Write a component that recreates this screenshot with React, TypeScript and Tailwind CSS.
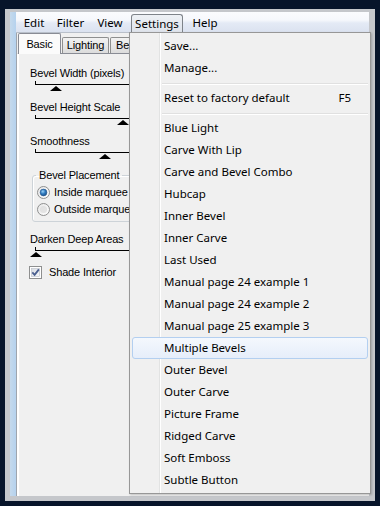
import React from "react";

const MENU_FONT = "font-['Noto_Sans','Open_Sans',sans-serif]";
const DLG_FONT = "font-['Liberation_Sans','Arial',sans-serif]";

function Thumb({ cls }: { cls: string }) {
  return (
    <svg className={"absolute top-[6px] " + cls} width="12" height="5" viewBox="0 0 12 5">
      <polygon points="6,0 12,5 0,5" fill="#000" />
    </svg>
  );
}

function SliderBlock({ label, thumbCls }: { label: string; thumbCls: string }) {
  return (
    <div className="flex flex-col">
      <div className="h-[14px] leading-[14px]">{label}</div>
      <div className="relative h-[20px] pl-[5px] pt-[1px]">
        <div className="h-[4px] border-l border-b border-black" />
        <Thumb cls={thumbCls} />
      </div>
    </div>
  );
}

function Radio({ checked, id }: { checked: boolean; id: string }) {
  return (
    <svg width="13" height="13" viewBox="0 0 13 13" className="shrink-0">
      <defs>
        <linearGradient id={id + "bg"} x1="0" y1="0" x2="1" y2="1">
          <stop offset="0" stopColor="#e6e6e6" />
          <stop offset="1" stopColor="#ffffff" />
        </linearGradient>
        <radialGradient id={id + "dot"} cx="0.4" cy="0.35" r="0.7">
          <stop offset="0" stopColor="#9bd0f5" />
          <stop offset="0.5" stopColor="#2f7bc0" />
          <stop offset="1" stopColor="#1c4f86" />
        </radialGradient>
      </defs>
      <circle cx="6.5" cy="6.5" r="6" fill={`url(#${id}bg)`} stroke="#8e8f8f" />
      {checked ? (
        <circle cx="6.5" cy="6.5" r="3.4" fill={`url(#${id}dot)`} stroke="#27578e" strokeWidth="0.6" />
      ) : (
        <circle cx="6.5" cy="6.5" r="3.6" fill="#dcdcdc" opacity="0.7" />
      )}
    </svg>
  );
}

function Checkbox() {
  return (
    <svg width="13" height="13" viewBox="0 0 13 13" className="shrink-0">
      <defs>
        <linearGradient id="cbg" x1="0" y1="0" x2="1" y2="1">
          <stop offset="0" stopColor="#d7dbe2" />
          <stop offset="1" stopColor="#f7f8fa" />
        </linearGradient>
      </defs>
      <rect x="0.5" y="0.5" width="12" height="12" fill="#fff" stroke="#8e8f8f" />
      <rect x="2.5" y="2.5" width="8" height="8" fill="url(#cbg)" stroke="#b9bec6" strokeWidth="0.6" />
      <path d="M3.3 6.4 L5.6 8.9 L9.9 3.4" fill="none" stroke="#4a5f8f" strokeWidth="1.8" />
    </svg>
  );
}

const presets = [
  "Blue Light",
  "Carve With Lip",
  "Carve and Bevel Combo",
  "Hubcap",
  "Inner Bevel",
  "Inner Carve",
  "Last Used",
  "Manual page 24 example 1",
  "Manual page 24 example 2",
  "Manual page 25 example 3",
  "Multiple Bevels",
  "Outer Bevel",
  "Outer Carve",
  "Picture Frame",
  "Ridged Carve",
  "Soft Emboss",
  "Subtle Button",
];

function MenuItem({ label, shortcut, hot }: { label: string; shortcut?: string; hot?: boolean }) {
  if (hot) {
    return (
      <div className="h-[22px] flex items-center pl-[31px] pr-[16px] rounded-[3px] border border-[#b3cff0] bg-[linear-gradient(to_bottom,#f4f8fd,#e6eefa)]">
        <span className="flex-1 whitespace-nowrap">{label}</span>
        {shortcut && <span>{shortcut}</span>}
      </div>
    );
  }
  return (
    <div className="h-[22px] flex items-center pl-[32px] pr-[17px]">
      <span className="flex-1 whitespace-nowrap">{label}</span>
      {shortcut && <span>{shortcut}</span>}
    </div>
  );
}

function Separator() {
  return (
    <div className="h-[8px] pt-[4px] pl-[30px]">
      <div className="h-[1px] bg-[#e0e0e0]" />
      <div className="h-[1px] bg-white" />
    </div>
  );
}

export default function App() {
  return (
    <div className="relative w-[380px] h-[506px] overflow-hidden bg-[#07142a] pt-[9px] px-[5px] pb-[5px] text-black">
      {/* Window */}
      <div className="h-full flex flex-col bg-[#c5c7cb] pt-[3px] pl-[5px] pr-[6px] pb-[5px]">
        <div className="flex-1 flex min-h-0">
          {/* left blue strip */}
          <div className="w-[6px] bg-[linear-gradient(to_right,#c5d9ec,#b5d2ee)]" />
          {/* main column */}
          <div className="flex-1 flex flex-col min-w-0">
            {/* menubar */}
            <div
              className={
                "h-[21px] shrink-0 flex items-stretch pl-[1px] border-b border-[#b9c0ca] text-[11.5px] bg-[linear-gradient(to_bottom,#fbfcfe_0%,#f6f8fc_40%,#e4eaf5_55%,#dbe2f0_100%)] " +
                MENU_FONT
              }
            >
              <div className="w-[34px] pt-[2px] flex items-center justify-center">Edit</div>
              <div className="w-[39px] pt-[2px] flex items-center justify-center">Filter</div>
              <div className="w-[40px] pt-[2px] flex items-center justify-center">View</div>
              <div className="ml-[1px] mt-[2px] mb-[-1px] w-[52px] flex items-center justify-center rounded-t-[3px] border border-[#7e8389] border-b-0 bg-[linear-gradient(to_bottom,#eef1f5,#dde2ea)]">
                Settings
              </div>
              <div className="ml-[3px] w-[38px] pt-[2px] flex items-center justify-center">Help</div>
            </div>
            {/* content */}
            <div className={"flex-1 flex flex-col bg-[#f0f0f0] border-l border-[#9ea5ae] text-[11px] tracking-[-0.15px] " + DLG_FONT}>
              {/* tabs */}
              <div className="h-[20px] shrink-0 flex items-end pl-[1px]">
                <div className="relative z-10 -mb-[1px] h-[21px] w-[43px] flex items-center justify-center border border-b-0 border-[#898c95] bg-[#fbfbfb] rounded-t-[2px]">
                  Basic
                </div>
                <div className="ml-[1px] h-[16px] w-[47px] flex items-center justify-center border border-b-0 border-[#8e8f8f] bg-[linear-gradient(to_bottom,#f2f2f2,#dcdcdc)] rounded-t-[2px]">
                  Lighting
                </div>
                <div className="ml-[1px] h-[16px] w-[40px] flex items-center pl-[5px] border border-b-0 border-[#8e8f8f] bg-[linear-gradient(to_bottom,#f2f2f2,#dcdcdc)] rounded-t-[2px]">
                  Bevel
                </div>
              </div>
              {/* panel */}
              <div className="flex-1 flex flex-col border-t border-[#898c95] border-l-[2px] border-l-white pl-[11px] pt-[12px]">
                <SliderBlock label="Bevel Width (pixels)" thumbCls="left-[20px]" />
                <SliderBlock label="Bevel Height Scale" thumbCls="left-[87px]" />
                <SliderBlock label="Smoothness" thumbCls="left-[69px]" />
                <fieldset className="ml-[2px] w-[160px] border border-[#cdd3d8] rounded-[3px] pl-[3px] pb-[3px] shadow-[inset_1px_1px_0_#fff]">
                  <legend className="px-[3px] leading-[14px]">Bevel Placement</legend>
                  <div className="pt-[2px] pl-[1px] flex flex-col">
                    <div className="h-[17px] flex items-center gap-[4px]">
                      <Radio checked id="r1" />
                      <span className="whitespace-nowrap">Inside marquee</span>
                    </div>
                    <div className="h-[17px] flex items-center gap-[4px]">
                      <Radio checked={false} id="r2" />
                      <span className="whitespace-nowrap">Outside marquee</span>
                    </div>
                  </div>
                </fieldset>
                <div className="mt-[10px]">
                  <SliderBlock label="Darken Deep Areas" thumbCls="left-[0px]" />
                </div>
                <div className="h-[13px] flex items-center gap-[7px] -ml-[1px]">
                  <Checkbox />
                  <span>Shade Interior</span>
                </div>
              </div>
            </div>
          </div>
        </div>
      </div>

      {/* Dropdown menu */}
      <div
        className={
          "absolute left-[129px] top-[32px] w-[242px] h-[462px] border border-[#979797] bg-[#f0f0f0] p-[2px] text-[11.5px] shadow-[1px_1px_2px_rgba(0,0,0,0.2)] " +
          MENU_FONT
        }
      >
        <div className="absolute left-[29px] top-0 bottom-0 w-[1px] bg-[#e2e3e3]" />
        <div className="absolute left-[30px] top-0 bottom-0 w-[1px] bg-white" />
        <div className="relative flex flex-col">
          <MenuItem label="Save..." />
          <MenuItem label="Manage..." />
          <Separator />
          <MenuItem label="Reset to factory default" shortcut="F5" />
          <Separator />
          {presets.map((p) => (
            <MenuItem key={p} label={p} hot={p === "Multiple Bevels"} />
          ))}
        </div>
      </div>
    </div>
  );
}
